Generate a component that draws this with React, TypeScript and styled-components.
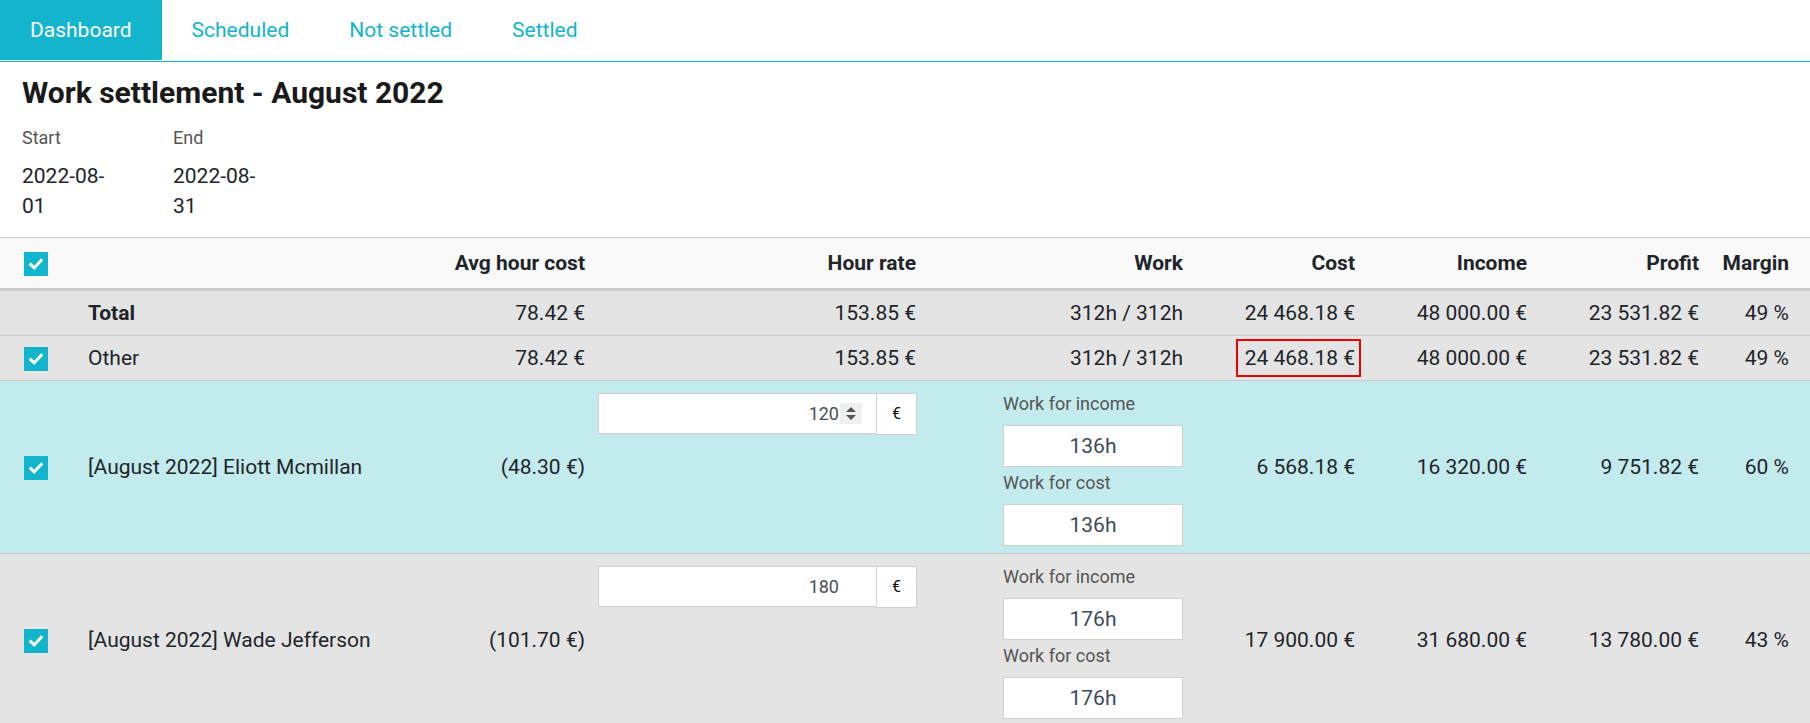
import React from 'react';
import styled, { createGlobalStyle } from 'styled-components';

const teal = '#12b5cb';

const GlobalStyle = createGlobalStyle`
  html, body {
    margin: 0;
    padding: 0;
    overflow: hidden;
    background: #fff;
    font-family: Roboto, "Liberation Sans", sans-serif;
    color: #212529;
  }
`;

type Row = {
    name: string;
    checked: boolean;
    bold?: boolean;
    avg: string;
    rate?: string;
    rateInput?: { value: string; spinner?: boolean };
    work?: string;
    workHours?: { income: string; cost: string };
    cost: string;
    highlightCost?: boolean;
    income: string;
    profit: string;
    margin: string;
    tone: 'gray' | 'teal';
};

const rows: Row[] = [
    {
        name: 'Total', checked: false, bold: true, avg: '78.42 €', rate: '153.85 €', work: '312h / 312h',
        cost: '24 468.18 €', income: '48 000.00 €', profit: '23 531.82 €', margin: '49 %', tone: 'gray',
    },
    {
        name: 'Other', checked: true, avg: '78.42 €', rate: '153.85 €', work: '312h / 312h',
        cost: '24 468.18 €', highlightCost: true, income: '48 000.00 €', profit: '23 531.82 €', margin: '49 %', tone: 'gray',
    },
    {
        name: '[August 2022] Eliott Mcmillan', checked: true, avg: '(48.30 €)',
        rateInput: { value: '120', spinner: true }, workHours: { income: '136h', cost: '136h' },
        cost: '6 568.18 €', income: '16 320.00 €', profit: '9 751.82 €', margin: '60 %', tone: 'teal',
    },
    {
        name: '[August 2022] Wade Jefferson', checked: true, avg: '(101.70 €)',
        rateInput: { value: '180' }, workHours: { income: '176h', cost: '176h' },
        cost: '17 900.00 €', income: '31 680.00 €', profit: '13 780.00 €', margin: '43 %', tone: 'gray',
    },
];

const tabs = ['Dashboard', 'Scheduled', 'Not settled', 'Settled'];

const CheckMark = () => (
    <Check>
        <svg width="24" height="24" viewBox="0 0 24 24">
            <path d="M6.8 12.6l3.4 3.3 7-7.6" fill="none" stroke="#fff" strokeWidth="3" strokeLinecap="square"/>
        </svg>
    </Check>
);

const App = () => {
    return (
        <Page>
            <GlobalStyle/>
            <TabBar>
                {tabs.map((t, i) => (
                    <Tab key={t} $active={i === 0}>{t}</Tab>
                ))}
            </TabBar>

            <Summary>
                <Title>Work settlement - August 2022</Title>
                <Dates>
                    <DateField>
                        <DateLabel>Start</DateLabel>
                        <DateValue>2022-08-01</DateValue>
                    </DateField>
                    <DateField>
                        <DateLabel>End</DateLabel>
                        <DateValue>2022-08-31</DateValue>
                    </DateField>
                </Dates>
            </Summary>

            <Table>
                <colgroup>
                    <col style={{width: 82}}/>
                    <col style={{width: 318}}/>
                    <col style={{width: 191}}/>
                    <col style={{width: 331}}/>
                    <col style={{width: 267}}/>
                    <col style={{width: 172}}/>
                    <col style={{width: 172}}/>
                    <col style={{width: 172}}/>
                    <col style={{width: 105}}/>
                </colgroup>
                <thead>
                <tr>
                    <HeadCell $check><CheckMark/></HeadCell>
                    <HeadCell/>
                    <HeadCell>Avg hour cost</HeadCell>
                    <HeadCell>Hour rate</HeadCell>
                    <HeadCell>Work</HeadCell>
                    <HeadCell>Cost</HeadCell>
                    <HeadCell>Income</HeadCell>
                    <HeadCell>Profit</HeadCell>
                    <HeadCell $last>Margin</HeadCell>
                </tr>
                </thead>
                <tbody>
                {rows.map(r => (
                    <BodyRow key={r.name} $tone={r.tone}>
                        <Cell $check>{r.checked && <CheckMark/>}</Cell>
                        <NameCell $bold={r.bold}>{r.name}</NameCell>
                        <Cell $num>{r.avg}</Cell>
                        {r.rateInput ? (
                            <Cell $top>
                                <InputGroup>
                                    <RateInput>
                                        {r.rateInput.value}
                                        <Spinner $visible={!!r.rateInput.spinner}>
                                            <svg width="22" height="21" viewBox="0 0 22 21">
                                                <path d="M6 9l5-5 5 5z M6 12l5 5 5-5z" fill="#555"/>
                                            </svg>
                                        </Spinner>
                                    </RateInput>
                                    <Addon>€</Addon>
                                </InputGroup>
                            </Cell>
                        ) : (
                            <Cell $num>{r.rate}</Cell>
                        )}
                        {r.workHours ? (
                            <Cell $top $work>
                                <WorkStack>
                                    <FieldLabel>Work for income</FieldLabel>
                                    <HoursBox>{r.workHours.income}</HoursBox>
                                    <FieldLabel $second>Work for cost</FieldLabel>
                                    <HoursBox>{r.workHours.cost}</HoursBox>
                                </WorkStack>
                            </Cell>
                        ) : (
                            <Cell $num>{r.work}</Cell>
                        )}
                        <Cell $num>
                            {r.highlightCost ? <Highlight>{r.cost}</Highlight> : r.cost}
                        </Cell>
                        <Cell $num>{r.income}</Cell>
                        <Cell $num>{r.profit}</Cell>
                        <Cell $num $last>{r.margin}</Cell>
                    </BodyRow>
                ))}
                </tbody>
            </Table>
        </Page>
    );
};

const Page = styled.div`
  width: 1810px;
  height: 723px;
  overflow: hidden;
`

const TabBar = styled.nav`
  display: flex;
  height: 60px;
  padding-bottom: 1px;
  border-bottom: 1px solid ${teal};
`

const Tab = styled.div<{ $active?: boolean }>`
  padding: 0 30px;
  height: 60px;
  line-height: 60px;
  font-size: 21px;
  color: ${p => (p.$active ? '#fff' : teal)};
  background: ${p => (p.$active ? teal : 'transparent')};
`

const Summary = styled.section`
  padding: 13px 22px 16px;
`

const Title = styled.h1`
  margin: 0;
  font-size: 30px;
  line-height: 36px;
  font-weight: 700;
  color: #1a1a1a;
`

const Dates = styled.div`
  display: flex;
  margin-top: 13px;
`

const DateField = styled.div`
  width: 92px;
  margin-right: 59px;
`

const DateLabel = styled.div`
  font-size: 18px;
  line-height: 27px;
  color: #555;
`

const DateValue = styled.div`
  margin-top: 10px;
  font-size: 21px;
  line-height: 30px;
  color: #212529;
`

const Table = styled.table`
  width: 1810px;
  table-layout: fixed;
  border-collapse: collapse;
  font-size: 21px;
  line-height: 30px;
  border-top: 1px solid #cfcfcf;
`

const HeadCell = styled.th<{ $check?: boolean; $last?: boolean }>`
  background: #f9f9f9;
  padding: 10px ${p => (p.$last ? '21px' : '6px')} 10px ${p => (p.$check ? '24px' : '6px')};
  text-align: ${p => (p.$check ? 'left' : 'right')};
  font-weight: 700;
  border-bottom: 3px solid #cbcbcb;
  vertical-align: middle;
  white-space: nowrap;
`

const BodyRow = styled.tr<{ $tone: 'gray' | 'teal' }>`
  background: ${p => (p.$tone === 'teal' ? '#c3ebed' : '#e4e4e4')};
  border-bottom: 1px solid #cbcbcb;
`

const Cell = styled.td<{ $check?: boolean; $num?: boolean; $last?: boolean; $top?: boolean; $work?: boolean }>`
  padding: ${p => (p.$top ? (p.$work ? '9px' : '12px') : '7px')} ${p => (p.$last ? '21px' : '6px')} 7px ${p => (p.$check ? '24px' : '6px')};
  vertical-align: ${p => (p.$top ? 'top' : 'middle')};
  text-align: ${p => (p.$num ? 'right' : 'left')};
  white-space: nowrap;
`

const NameCell = styled.td<{ $bold?: boolean }>`
  padding: 7px 6px;
  font-weight: ${p => (p.$bold ? 700 : 400)};
  vertical-align: middle;
  white-space: nowrap;
`

const Check = styled.span`
  display: inline-flex;
  width: 24px;
  height: 24px;
  background: ${teal};
  vertical-align: middle;
  svg {
    display: block;
  }
`

const InputGroup = styled.div`
  display: flex;
  width: 319px;
  margin-left: 1px;
`

const RateInput = styled.div`
  flex: 1;
  display: flex;
  align-items: center;
  justify-content: flex-end;
  height: 39px;
  padding-right: 14px;
  background: #fff;
  border: 1px solid #cfcfcf;
  font-size: 18px;
  color: #495057;
`

const Spinner = styled.span<{ $visible: boolean }>`
  display: inline-flex;
  width: 22px;
  height: 21px;
  margin-left: 1px;
  background: ${p => (p.$visible ? '#efefef' : 'transparent')};
  visibility: ${p => (p.$visible ? 'visible' : 'hidden')};
`

const Addon = styled.div`
  width: 39px;
  height: 40px;
  display: flex;
  align-items: center;
  justify-content: center;
  background: #fff;
  border: 1px solid #cfcfcf;
  border-left: none;
  font-size: 16px;
  color: #111;
`

const WorkStack = styled.div`
  width: 180px;
  margin-left: auto;
  text-align: left;
`

const FieldLabel = styled.div<{ $second?: boolean }>`
  font-size: 18px;
  line-height: 27px;
  color: #555;
  margin-top: ${p => (p.$second ? '2px' : '0')};
`

const HoursBox = styled.div`
  margin-top: 8px;
  height: 40px;
  line-height: 40px;
  background: #fff;
  border: 1px solid #cfcfcf;
  text-align: center;
  font-size: 21px;
  color: #3d4a57;
`

const Highlight = styled.span`
  position: relative;
  display: inline-block;
  &::after {
    content: '';
    position: absolute;
    top: -4px;
    bottom: -4px;
    left: -9px;
    right: -6px;
    border: 2px solid #e00;
  }
`

export default App;
